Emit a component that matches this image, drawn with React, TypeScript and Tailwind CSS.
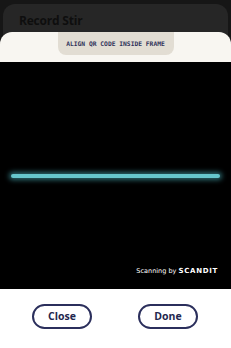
export default function App() {
  return (
    <div className="w-[231px] h-[348px] bg-[#161616] overflow-hidden relative font-['Open_Sans',sans-serif]">
      {/* back card */}
      <div className="absolute left-[3px] right-[3px] top-[4px] h-[60px] rounded-t-[12px] bg-[#262626]">
        <div className="pl-[16px] pt-[8px] text-[12px] font-bold text-[#0e0e0e] tracking-[-0.2px]">Record Stir</div>
      </div>

      {/* scanner sheet */}
      <div className="absolute left-0 right-0 top-[32px] bottom-0 flex flex-col">
        <div className="h-[30px] bg-[#f8f6f1] rounded-t-[12px] flex justify-center">
          <div className="w-[116px] h-[23px] bg-[#e2ddd3] rounded-b-[8px] flex items-center justify-center">
            <span className="whitespace-nowrap font-['DejaVu_Sans_Mono',monospace] font-bold text-[6.3px] text-[#30335a]">
              ALIGN QR CODE INSIDE FRAME
            </span>
          </div>
        </div>

        <div className="h-[227px] bg-black relative flex items-center px-[11px]">
          <div className="w-full h-[4px] rounded-full bg-[#66c6cc] shadow-[0_0_5px_2px_rgba(80,190,200,0.55)]" />
          <span className="absolute right-[13px] bottom-[12px] text-[6.5px] text-white font-['DejaVu_Sans',sans-serif]">
            Scanning by <span className="font-semibold tracking-[0.7px] text-[7px]">SCANDIT</span>
          </span>
        </div>

        <div className="flex-1 bg-white flex justify-between items-start pt-[15px] pl-[32px] pr-[33px]">
          <button className="w-[60px] h-[25px] rounded-full border-2 border-[#2b2f5c] text-[10.5px] font-bold text-[#23274f]">
            Close
          </button>
          <button className="w-[60px] h-[25px] rounded-full border-2 border-[#2b2f5c] text-[10.5px] font-bold text-[#23274f]">
            Done
          </button>
        </div>
      </div>
    </div>
  )
}
